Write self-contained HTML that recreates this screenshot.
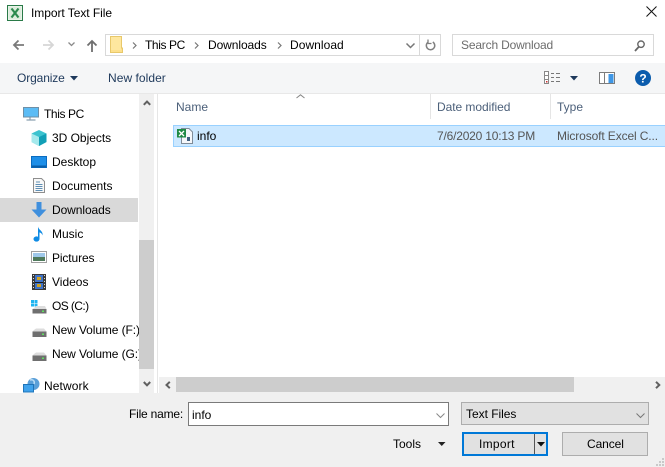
<!DOCTYPE html>
<html><head><meta charset="utf-8">
<style>
html,body{margin:0;padding:0}
body{width:665px;height:467px;overflow:hidden;background:#fff;position:relative;font-family:"Liberation Sans",sans-serif;font-size:12px;color:#000}
.a{position:absolute}
.t{position:absolute;white-space:nowrap;line-height:16px;height:16px}
svg{position:absolute;overflow:visible}
</style></head><body>

<!-- title -->
<svg style="left:7px;top:5px" width="16" height="16"><rect x=".5" y=".5" width="15" height="15" fill="#e8f2e8" stroke="#2a7a48"/><rect x="2" y="2" width="12" height="12" fill="#dcecdc"/><path d="M4.500 3.500L11.500 12.500M11.500 3.500L4.500 12.500" stroke="#2b8a4e" stroke-width="2.200"/></svg>
<div class="t" style="left:31px;top:5px;letter-spacing:-.05px">Import Text File</div>
<svg style="left:646px;top:6px" width="13" height="13"><path d="M.5 .5L10.500 10.500M10.500 .5L.5 10.500" stroke="#111" stroke-width="1"/></svg>

<!-- nav arrows -->
<svg style="left:12px;top:39px" width="13" height="12"><path d="M12 6H2M6.500 1.500L2 6l4.500 4.500" fill="none" stroke="#7a7a7a" stroke-width="1.800"/></svg>
<svg style="left:42px;top:39px" width="13" height="12"><path d="M1 6H11M6.500 1.500L11 6l-4.500 4.500" fill="none" stroke="#d6d6d6" stroke-width="1.800"/></svg>
<svg style="left:68px;top:42px" width="7" height="5"><path d="M.5 .5L3.500 3.500L6.500 .5" fill="none" stroke="#8a8a8a" stroke-width="1.300"/></svg>
<svg style="left:86px;top:39px" width="12" height="13"><path d="M6 13V2M1.500 6.500L6 2l4.500 4.500" fill="none" stroke="#6f6f6f" stroke-width="1.800"/></svg>

<!-- address -->
<div class="a" style="left:105px;top:34px;width:334px;height:20px;border:1px solid #d9d9d9"></div>
<div class="a" style="left:419px;top:35px;width:1px;height:20px;background:#d9d9d9"></div>
<svg style="left:110px;top:36px" width="13" height="17"><path d="M.5 .5H11.500V12H12.500V16.500H.5Z" fill="#fde08c" stroke="#e8c86a"/><rect x="1" y="1" width="10" height="13" fill="#fee79f"/></svg>
<svg style="left:132px;top:42px" width="5" height="7"><path d="M1 .5L4 3.500L1 6.500" fill="none" stroke="#777" stroke-width="1.200"/></svg>
<div class="t" style="left:145px;top:37px;letter-spacing:-.4px">This PC</div>
<svg style="left:194px;top:42px" width="5" height="7"><path d="M1 .5L4 3.500L1 6.500" fill="none" stroke="#777" stroke-width="1.200"/></svg>
<div class="t" style="left:208px;top:37px;letter-spacing:-.08px">Downloads</div>
<svg style="left:277px;top:42px" width="5" height="7"><path d="M1 .5L4 3.500L1 6.500" fill="none" stroke="#777" stroke-width="1.200"/></svg>
<div class="t" style="left:290px;top:37px;letter-spacing:.05px">Download</div>
<svg style="left:406px;top:43px" width="9" height="6"><path d="M.5 .5L4.500 4.500L8.500 .5" fill="none" stroke="#777" stroke-width="1.500"/></svg>
<svg style="left:425px;top:39px" width="11" height="12"><path d="M7.800 3A4.200 4.200 0 1 1 3 3.200" fill="none" stroke="#808080" stroke-width="1.500"/><path d="M3 .5V4.500H6.500" fill="none" stroke="#808080" stroke-width="1.300"/></svg>

<!-- search -->
<div class="a" style="left:452px;top:34px;width:200px;height:20px;border:1px solid #d9d9d9"></div>
<div class="t" style="left:461px;top:37px;color:#6d6d6d;letter-spacing:-.18px">Search Download</div>
<svg style="left:634px;top:40px" width="11" height="12"><circle cx="7" cy="4.200" r="3.200" fill="none" stroke="#666" stroke-width="1.400"/><path d="M4.800 6.800L1 11" stroke="#666" stroke-width="1.800"/></svg>

<!-- command bar -->
<div class="a" style="left:0;top:63px;width:665px;height:30px;background:#f5f6f7;border-bottom:1px solid #e8e8e8"></div>
<div class="t" style="left:17px;top:70px;color:#1e395b;letter-spacing:-.12px">Organize</div>
<svg style="left:70px;top:76px" width="8" height="5"><path d="M0 0H8L4 4.500Z" fill="#1e395b"/></svg>
<div class="t" style="left:108px;top:70px;color:#1e395b;letter-spacing:.05px">New folder</div>
<svg style="left:544px;top:71px" width="17" height="13"><rect x=".5" y=".5" width="4" height="4" fill="#fff" stroke="#888"/><rect x=".5" y="4.500" width="4" height="4" fill="#fff" stroke="#888"/><rect x=".5" y="8.500" width="4" height="4" fill="#fff" stroke="#888"/><rect x="2" y="10" width="1.500" height="1.500" fill="#c33"/><path d="M7 2.500H10M12 2.500H16M7 6.500H10M12 6.500H16M7 10.500H10M12 10.500H16" stroke="#777"/></svg>
<svg style="left:570px;top:76px" width="8" height="5"><path d="M0 0H8L4 4.500Z" fill="#1e395b"/></svg>
<svg style="left:599px;top:72px" width="16" height="12"><rect x=".5" y=".5" width="15" height="11" fill="#fff" stroke="#7c7c7c"/><rect x="5" y="1" width="1" height="10" fill="#7c7c7c"/><rect x="9.500" y="2" width="5" height="9" fill="#3f97e6"/></svg>
<svg style="left:635px;top:70px" width="16" height="16"><circle cx="8" cy="8" r="8" fill="#0b5cad"/><text x="8" y="12.500" text-anchor="middle" font-family="Liberation Sans" font-weight="bold" font-size="12" fill="#fff">?</text></svg>

<!-- sidebar -->
<div class="a" style="left:0;top:198px;width:138px;height:24px;background:#d9d9d9"></div>
<div class="a" style="left:139px;top:94px;width:15px;height:299px;background:#f0f0f0"></div>
<div class="a" style="left:139px;top:240px;width:15px;height:129px;background:#cdcdcd"></div>
<svg style="left:143px;top:100px" width="8" height="6"><path d="M.8 4.800L4 1.500L7.200 4.800" fill="none" stroke="#606060" stroke-width="2"/></svg>
<svg style="left:143px;top:381px" width="8" height="6"><path d="M.8 1L4 4.300L7.200 1" fill="none" stroke="#606060" stroke-width="2"/></svg>
<div class="a" style="left:157px;top:94px;width:1px;height:299px;background:#e6e6e6"></div>

<!-- this pc -->
<svg style="left:23px;top:107px" width="16" height="14"><rect x=".5" y=".5" width="15" height="9.500" fill="#5cbcf5" stroke="#6e8fa6"/><path d="M7 10.500V12.500M3.500 13H12.500" stroke="#8aa0b0" stroke-width="1.200"/></svg>
<div class="t" style="left:44px;top:106px;letter-spacing:-.4px">This PC</div>
<!-- 3D -->
<svg style="left:31px;top:130px" width="16" height="16"><path d="M8 0L15.500 3.500V12L8 16L.5 12V3.500Z" fill="#3cc3cf"/><path d="M.5 3.500L8 7V16L.5 12Z" fill="#a5e9ec"/><path d="M8 7L15.500 3.500V12L8 16Z" fill="#129fb6"/></svg>
<div class="t" style="left:52px;top:130px;letter-spacing:-.02px">3D Objects</div>
<!-- Desktop -->
<svg style="left:31px;top:156px" width="16" height="12"><rect x=".5" y=".5" width="15" height="11" fill="#1e8fe8" stroke="#0a6cc0"/><rect x="1" y="9.500" width="14" height="2" fill="#0a5ea8"/></svg>
<div class="t" style="left:52px;top:154px">Desktop</div>
<!-- Documents -->
<svg style="left:33px;top:178px" width="12" height="15"><path d="M.5 .5H8.500L11.500 3.500V14.500H.5Z" fill="#f8f8f8" stroke="#8e8e8e"/><path d="M3 4H7M2.500 6.500H9.500M2.500 8.500H9.500M2.500 10.500H9.500M2.500 12.500H9.500" stroke="#5f8fb5"/></svg>
<div class="t" style="left:52px;top:178px;letter-spacing:-.03px">Documents</div>
<!-- Downloads -->
<svg style="left:31px;top:202px" width="16" height="16"><path d="M5.500 0H10.500V7.500H15.500L8 15.500L.5 7.500H5.500Z" fill="#3f8fdd"/></svg>
<div class="t" style="left:52px;top:202px;letter-spacing:-.08px">Downloads</div>
<!-- Music -->
<svg style="left:33px;top:226px" width="12" height="16"><ellipse cx="3.500" cy="13" rx="3" ry="2.600" fill="#0f8be4"/><path d="M5 13V.5C5.500 4 10.500 5 9.500 9.500C9 7.500 7.500 6.500 6.500 6.500V13Z" fill="#0f8be4"/></svg>
<div class="t" style="left:52px;top:226px">Music</div>
<!-- Pictures -->
<svg style="left:31px;top:251px" width="16" height="12"><rect x=".5" y=".5" width="15" height="11" fill="#fff" stroke="#a0a0a0"/><rect x="2" y="2" width="12" height="4" fill="#9fc8ea"/><rect x="2" y="6" width="12" height="4" fill="#4f7a5c"/></svg>
<div class="t" style="left:52px;top:250px;letter-spacing:-.12px">Pictures</div>
<!-- Videos -->
<svg style="left:32px;top:274px" width="14" height="16"><rect width="14" height="16" fill="#3a3a3a"/><rect x="3" y="1" width="8" height="14" fill="#3f73c9"/><path d="M3 8.500H11" stroke="#1a1a1a"/><rect x="5" y="3" width="4" height="3" fill="#d1a31e"/><rect x="5" y="10" width="4" height="3" fill="#d1a31e"/><path d="M1.500 1V15M12.500 1V15" stroke="#ddd" stroke-dasharray="1 2"/></svg>
<div class="t" style="left:52px;top:274px">Videos</div>
<!-- OS -->
<svg style="left:31px;top:300px" width="16" height="14"><rect x="0" y="0" width="3" height="3" fill="#1eb4f0"/><rect x="3.500" y="0" width="3" height="3" fill="#1eb4f0"/><rect x="0" y="3.500" width="3" height="3" fill="#1eb4f0"/><rect x="3.500" y="3.500" width="3" height="3" fill="#1eb4f0"/><path d="M3 8L5 6H14L15.500 9H1.500Z" fill="#ddd"/><rect x="1.500" y="9" width="14" height="4.500" fill="#6f6f6f"/><rect x="11" y="10.500" width="2" height="1.500" fill="#5fe05f"/></svg>
<div class="t" style="left:52px;top:298px;letter-spacing:-.6px">OS (C:)</div>
<!-- F -->
<svg style="left:31px;top:324px" width="16" height="14"><path d="M3 6L5 4.500H13L15.500 7.500H1.500Z" fill="#ddd"/><rect x="1.500" y="7.500" width="14" height="5.500" fill="#6f6f6f"/><rect x="11" y="9.500" width="2" height="1.500" fill="#5fe05f"/></svg>
<div class="a" style="left:52px;top:322px;width:87px;height:16px;overflow:hidden"><div class="t" style="left:0;top:0;letter-spacing:-.1px">New Volume (F:)</div></div>
<!-- G -->
<svg style="left:31px;top:348px" width="16" height="14"><path d="M3 6L5 4.500H13L15.500 7.500H1.500Z" fill="#ddd"/><rect x="1.500" y="7.500" width="14" height="5.500" fill="#6f6f6f"/><rect x="11" y="9.500" width="2" height="1.500" fill="#5fe05f"/></svg>
<div class="a" style="left:52px;top:346px;width:87px;height:16px;overflow:hidden"><div class="t" style="left:0;top:0;letter-spacing:-.1px">New Volume (G:)</div></div>
<!-- Network -->
<svg style="left:23px;top:378px" width="17" height="15"><circle cx="10.500" cy="6" r="6" fill="#5a9fd8"/><path d="M7 2C10 1 12 3 11 6" fill="none" stroke="#b9dcf5" stroke-width="1.500"/><rect x=".5" y="6.500" width="10" height="7.500" fill="#3fa2ec" stroke="#1f74b8"/></svg>
<div class="t" style="left:44px;top:378px;letter-spacing:.1px">Network</div>

<!-- list header -->
<svg style="left:296px;top:94px" width="9" height="5"><path d="M.5 4L4.500 .8L8.500 4" fill="none" stroke="#888"/></svg>
<div class="t" style="left:176px;top:99px;color:#4c607a">Name</div>
<div class="a" style="left:430px;top:94px;width:1px;height:25px;background:#e5e5e5"></div>
<div class="t" style="left:437px;top:99px;color:#4c607a;letter-spacing:-.05px">Date modified</div>
<div class="a" style="left:550px;top:94px;width:1px;height:25px;background:#e5e5e5"></div>
<div class="t" style="left:557px;top:99px;color:#4c607a">Type</div>

<!-- selected row -->
<div class="a" style="left:173px;top:125px;width:492px;height:20px;background:#cce8ff;border:1px solid #99d1ff;border-right:0"></div>
<svg style="left:177px;top:128px" width="16" height="16"><path d="M4.500 .5H12L15.500 4V15.500H4.500Z" fill="#f5f7fa" stroke="#7f8c99"/><rect x="0" y="1" width="9" height="8.500" fill="#1f8a45"/><path d="M2 3L7 8M7 3L2 8" stroke="#fff" stroke-width="1.300"/><rect x="10" y="9" width="3" height="4" fill="#3f6080"/></svg>
<div class="t" style="left:197px;top:128px">info</div>
<div class="t" style="left:437px;top:128px;color:#555;letter-spacing:-.2px">7/6/2020 10:13 PM</div>
<div class="t" style="left:557px;top:128px;color:#555;letter-spacing:-.12px">Microsoft Excel C...</div>

<!-- h scrollbar -->
<div class="a" style="left:159px;top:377px;width:506px;height:16px;background:#f0f0f0"></div>
<div class="a" style="left:176px;top:377px;width:398px;height:15px;background:#cdcdcd"></div>
<svg style="left:165px;top:381px" width="6" height="8"><path d="M4.800 .8L1.500 4L4.800 7.200" fill="none" stroke="#606060" stroke-width="2"/></svg>
<svg style="left:655px;top:381px" width="6" height="8"><path d="M1 .8L4.300 4L1 7.200" fill="none" stroke="#606060" stroke-width="2"/></svg>

<!-- bottom -->
<div class="a" style="left:0;top:393px;width:665px;height:74px;background:#f0f0f0"></div>
<div class="t" style="left:129px;top:406px;letter-spacing:-.2px">File name:</div>
<div class="a" style="left:188px;top:402px;width:259px;height:22px;background:#fff;border:1px solid #7a7a7a"></div>
<div class="t" style="left:192px;top:407px">info</div>
<svg style="left:436px;top:413px" width="9" height="6"><path d="M.5 .5L4.500 4.500L8.500 .5" fill="none" stroke="#888"/></svg>
<div class="a" style="left:461px;top:402px;width:186px;height:21px;background:#e1e1e1;border:1px solid #adadad"></div>
<div class="t" style="left:466px;top:406px;letter-spacing:-.03px">Text Files</div>
<svg style="left:636px;top:413px" width="9" height="6"><path d="M.5 .5L4.500 4.500L8.500 .5" fill="none" stroke="#777"/></svg>
<div class="t" style="left:393px;top:436px">Tools</div>
<svg style="left:438px;top:442px" width="8" height="5"><path d="M0 0H7.500L3.750 4Z" fill="#222"/></svg>
<div class="a" style="left:462px;top:432px;width:82px;height:20px;background:#e1e1e1;border:2px solid #0078d7"></div>
<div class="t" style="left:479px;top:436px;letter-spacing:.3px">Import</div>
<div class="a" style="left:534px;top:434px;width:1px;height:20px;background:#555"></div>
<svg style="left:537px;top:442px" width="8" height="5"><path d="M0 0H8L4 4.500Z" fill="#111"/></svg>
<div class="a" style="left:562px;top:432px;width:84px;height:22px;background:#e1e1e1;border:1px solid #adadad"></div>
<div class="t" style="left:587px;top:436px;letter-spacing:-.1px">Cancel</div>
<svg style="left:655px;top:458px" width="9" height="8"><path d="M7 0h2v2H7zM4 3h2v2H4zM7 3h2v2H7zM1 6h2v2H1zM4 6h2v2H4zM7 6h2v2H7z" fill="#c9c9c9"/></svg>
</body></html>
